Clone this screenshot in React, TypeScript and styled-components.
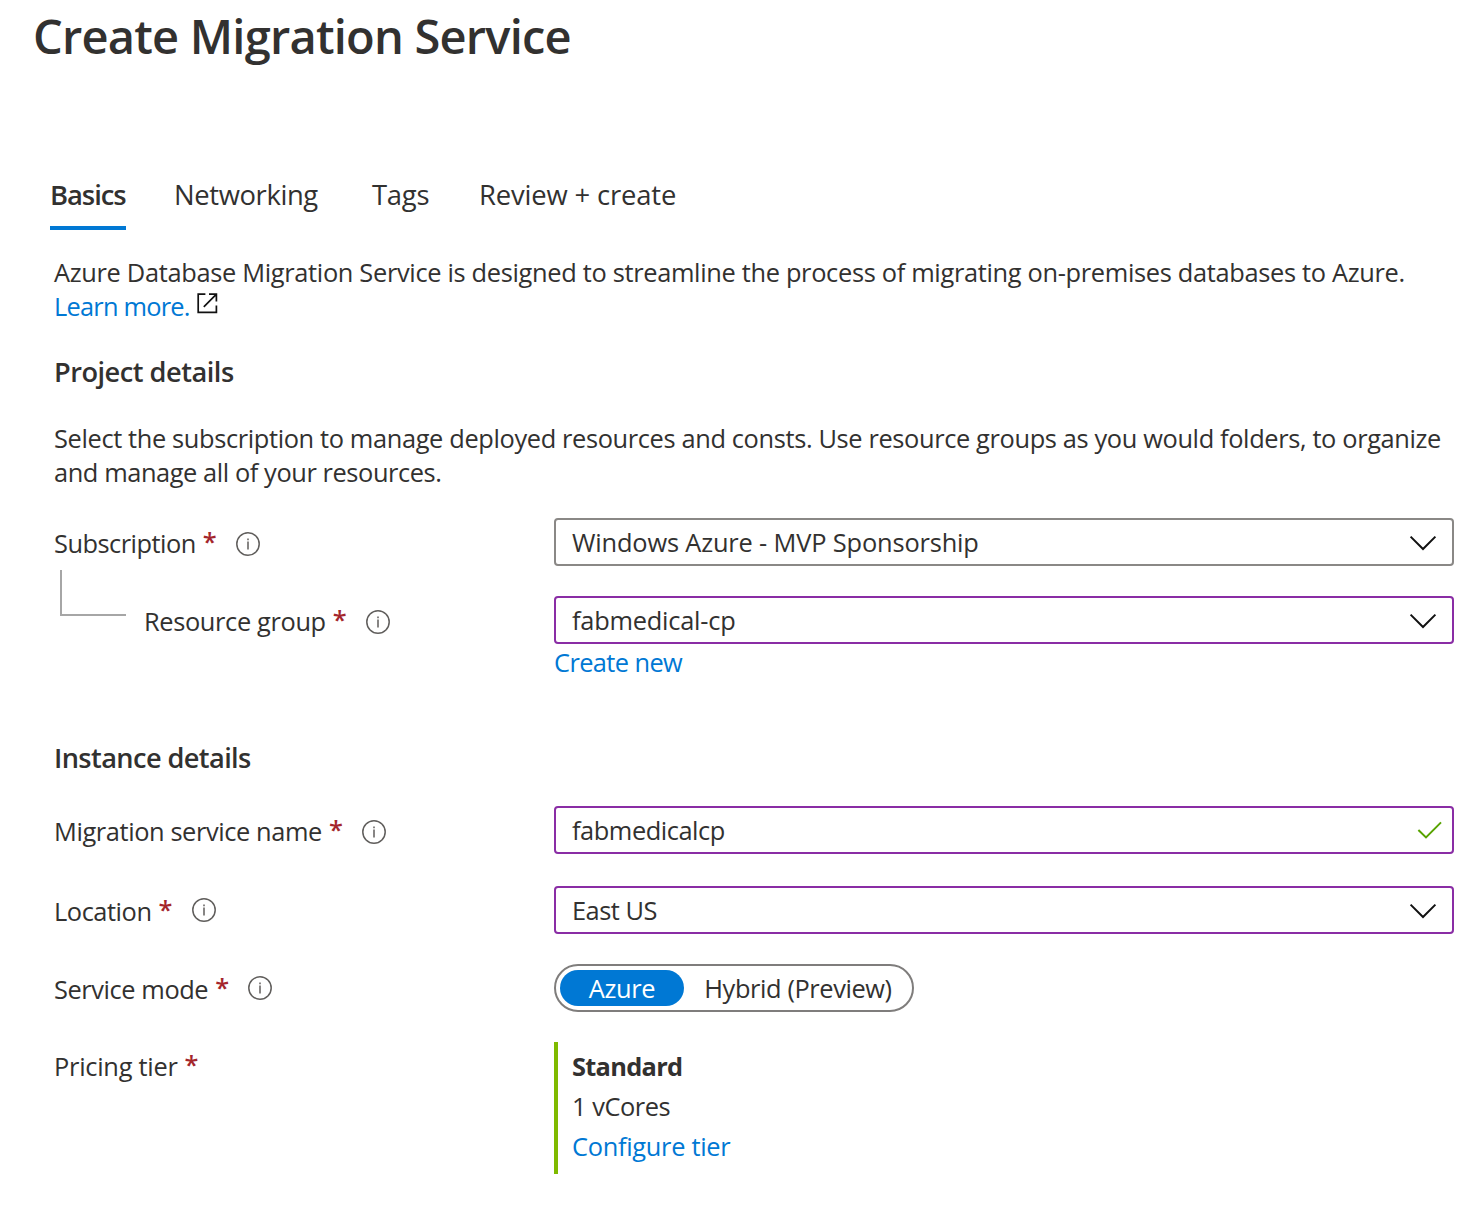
import React from "react";
import styled, { createGlobalStyle } from "styled-components";

const GlobalStyle = createGlobalStyle`
  * { box-sizing: border-box; }
  body { margin: 0; background: #fff; }
`;

const Page = styled.main`
  width: 1478px;
  height: 1214px;
  overflow: hidden;
  background: #fff;
  color: #323130;
  font-family: "Open Sans", "Noto Sans", sans-serif;
  font-size: 25.4px;
  line-height: 34px;
  white-space: nowrap;
`;

const T = styled.span<{ $ls?: number }>`
  letter-spacing: ${(p) => p.$ls ?? 0}px;
`;

const Title = styled.h1`
  margin: 0;
  padding: 6px 0 0 33px;
  height: 166px;
  font-size: 47px;
  line-height: 60px;
  font-weight: 600;
`;

const Tabs = styled.nav`
  display: flex;
  height: 64px;
  padding-left: 50px;
`;

const Tab = styled.a<{ $active?: boolean; $width: number }>`
  width: ${(p) => p.$width}px;
  height: 64px;
  padding-top: 10px;
  font-size: 27.4px;
  line-height: 38px;
  font-weight: ${(p) => (p.$active ? 600 : 400)};
  border-bottom: 4px solid ${(p) => (p.$active ? "#0078d4" : "transparent")};
  & + & { margin-left: 48px; }
`;

const Paragraph = styled.p<{ $top?: number }>`
  margin: 0;
  padding: ${(p) => p.$top ?? 0}px 0 0 54px;
`;

const Line = styled.span`
  display: flex;
  height: 34px;
`;

const Heading = styled.h2<{ $top: number; $height: number }>`
  margin: 0;
  padding: ${(p) => p.$top}px 0 0 54px;
  height: ${(p) => p.$height}px;
  font-size: 27.2px;
  line-height: 38px;
  font-weight: 600;
`;

const Link = styled.a`
  color: #0078d4;
`;

const FieldLink = styled(Link)`
  display: block;
  height: 34px;
  margin-top: 1px;
`;

const Row = styled.div<{ $gap?: number }>`
  display: grid;
  grid-template-columns: 500px 900px;
  padding-left: 54px;
  margin-bottom: ${(p) => p.$gap ?? 0}px;
`;

const Form = styled.section`
  padding-top: 29px;
`;

const Label = styled.label<{ $shift?: number }>`
  display: flex;
  align-items: center;
  height: 48px;
  padding-top: ${(p) => p.$shift ?? 2}px;
`;

const Star = styled.span`
  width: 12px;
  margin: 0 0 4px 8px;
  display: flex;
  justify-content: center;
  font-weight: 600;
  color: #a4262c;
`;

const InfoSvg = styled.svg<{ $up?: boolean }>`
  margin: ${(p) => (p.$up ? "0 0 2px 20px" : "2px 0 0 20px")};
`;

const Connector = styled.span`
  align-self: flex-start;
  flex: none;
  width: 66px;
  height: 46px;
  margin: -28px 18px 0 6px;
  border: solid #a6a6a6;
  border-width: 0 0 2px 2px;
`;

const Field = styled.div<{ $edited?: boolean }>`
  display: flex;
  align-items: center;
  justify-content: space-between;
  height: 48px;
  padding: 0 15px 0 16px;
  border: 2px solid ${(p) => (p.$edited ? "#8a2da5" : "#8a8886")};
  border-radius: 4px;
`;

const ChevronSvg = styled.svg`
  margin-top: 2px;
`;

const CheckSvg = styled.svg`
  margin-right: -6px;
`;

const Pill = styled.div`
  display: flex;
  width: 360px;
  height: 48px;
  padding: 4px;
  border: 2px solid #7f7d7c;
  border-radius: 24px;
`;

const Option = styled.span<{ $on?: boolean; $width: number }>`
  display: flex;
  align-items: center;
  justify-content: center;
  width: ${(p) => p.$width}px;
  height: 36px;
  padding-left: ${(p) => (p.$on ? 0 : 4)}px;
  border-radius: 18px;
  color: ${(p) => (p.$on ? "#fff" : "#323130")};
  background: ${(p) => (p.$on ? "#0078d4" : "transparent")};
`;

const Tier = styled.div`
  display: flex;
  flex-direction: column;
  height: 132px;
  padding: 4px 0 0 14px;
  border-left: 4px solid #7fba00;
  line-height: 40px;
`;

const Strong = styled.strong`
  font-weight: 700;
`;

const Info = ({ up }: { up?: boolean }) => (
  <InfoSvg $up={up} width="24" height="24" viewBox="0 0 24 24" fill="none">
    <circle cx="12" cy="12" r="11.2" stroke="#605e5c" strokeWidth="1.5" />
    <path d="M12 9.6v7.8M12 6.4v1.8" stroke="#605e5c" strokeWidth="1.5" />
  </InfoSvg>
);

const Chevron = () => (
  <ChevronSvg width="28" height="16" viewBox="0 0 28 16" fill="none">
    <path d="M1.6 1.6L14 14L26.4 1.6" stroke="#111" strokeWidth="2" />
  </ChevronSvg>
);

const ExternalSvg = styled.svg`
  margin: 4px 0 0 7px;
`;

const External = () => (
  <ExternalSvg width="21" height="21" viewBox="0 0 21 21" fill="none" stroke="#111" strokeWidth="1.7">
    <path d="M8.4 1.2H1.2V19.4H19.4V12.4" />
    <path d="M12 1.2H19.4V8.4M19.2 1.4L6.8 13.8" />
  </ExternalSvg>
);

type LabelProps = { text: string; ls?: number; shift?: number; info?: boolean; up?: boolean; nested?: boolean };

const FieldLabel = ({ text, ls, shift, info = true, up, nested }: LabelProps) => (
  <Label $shift={shift}>
    {nested && <Connector />}
    <T $ls={ls}>{text}</T>
    <Star>*</Star>
    {info && <Info up={up} />}
  </Label>
);

export default function App() {
  return (
    <>
      <GlobalStyle />
      <Page>
        <Title><T $ls={-0.78}>Create Migration Service</T></Title>
        <Tabs>
          <Tab $active $width={76}><T $ls={-1.05}>Basics</T></Tab>
          <Tab $width={150}><T $ls={-0.38}>Networking</T></Tab>
          <Tab $width={59}><T $ls={-0.25}>Tags</T></Tab>
          <Tab $width={200}><T $ls={-0.15}>Review + create</T></Tab>
        </Tabs>
        <Paragraph $top={25}>
          <Line><T $ls={-0.324}>Azure Database Migration Service is designed to streamline the process of migrating on-premises databases to Azure.</T></Line>
          <Line><Link><T $ls={-0.78}>Learn more.</T></Link><External /></Line>
        </Paragraph>
        <Heading $top={30} $height={98}><T $ls={-0.5}>Project details</T></Heading>
        <Paragraph>
          <Line><T $ls={-0.366}>Select the subscription to manage deployed resources and consts. Use resource groups as you would folders, to organize</T></Line>
          <Line><T $ls={-0.42}>and manage all of your resources.</T></Line>
        </Paragraph>
        <Form>
          <Row $gap={30}>
            <FieldLabel text="Subscription" ls={-0.51} />
            <Field><T $ls={-0.16}>Windows Azure - MVP Sponsorship</T><Chevron /></Field>
          </Row>
          <Row>
            <FieldLabel text="Resource group" ls={-0.36} nested />
            <div>
              <Field $edited><T $ls={-0.23}>fabmedical-cp</T><Chevron /></Field>
              <FieldLink><T $ls={-0.6}>Create new</T></FieldLink>
            </div>
          </Row>
        </Form>
        <Heading $top={60} $height={127}><T $ls={-0.6}>Instance details</T></Heading>
        <Row $gap={32}>
          <FieldLabel text="Migration service name" ls={-0.4} />
          <Field $edited>
            <T $ls={-0.45}>fabmedicalcp</T>
            <CheckSvg width="26" height="18" viewBox="0 0 26 18" fill="none">
              <path d="M1.4 9L9 16.4L24 1.4" stroke="#57a300" strokeWidth="2" />
            </CheckSvg>
          </Field>
        </Row>
        <Row $gap={30}>
          <FieldLabel text="Location" ls={-0.45} up />
          <Field $edited><T $ls={-0.5}>East US</T><Chevron /></Field>
        </Row>
        <Row $gap={30}>
          <FieldLabel text="Service mode" ls={-0.42} up />
          <Pill>
            <Option $on $width={124}><T $ls={-0.3}>Azure</T></Option>
            <Option $width={224}><T $ls={-0.4}>Hybrid (Preview)</T></Option>
          </Pill>
        </Row>
        <Row>
          <FieldLabel text="Pricing tier" ls={-0.26} shift={0} info={false} />
          <Tier>
            <Strong><T $ls={-0.7}>Standard</T></Strong>
            <T $ls={-0.45}>1 vCores</T>
            <Link><T $ls={-0.3}>Configure tier</T></Link>
          </Tier>
        </Row>
      </Page>
    </>
  );
}
